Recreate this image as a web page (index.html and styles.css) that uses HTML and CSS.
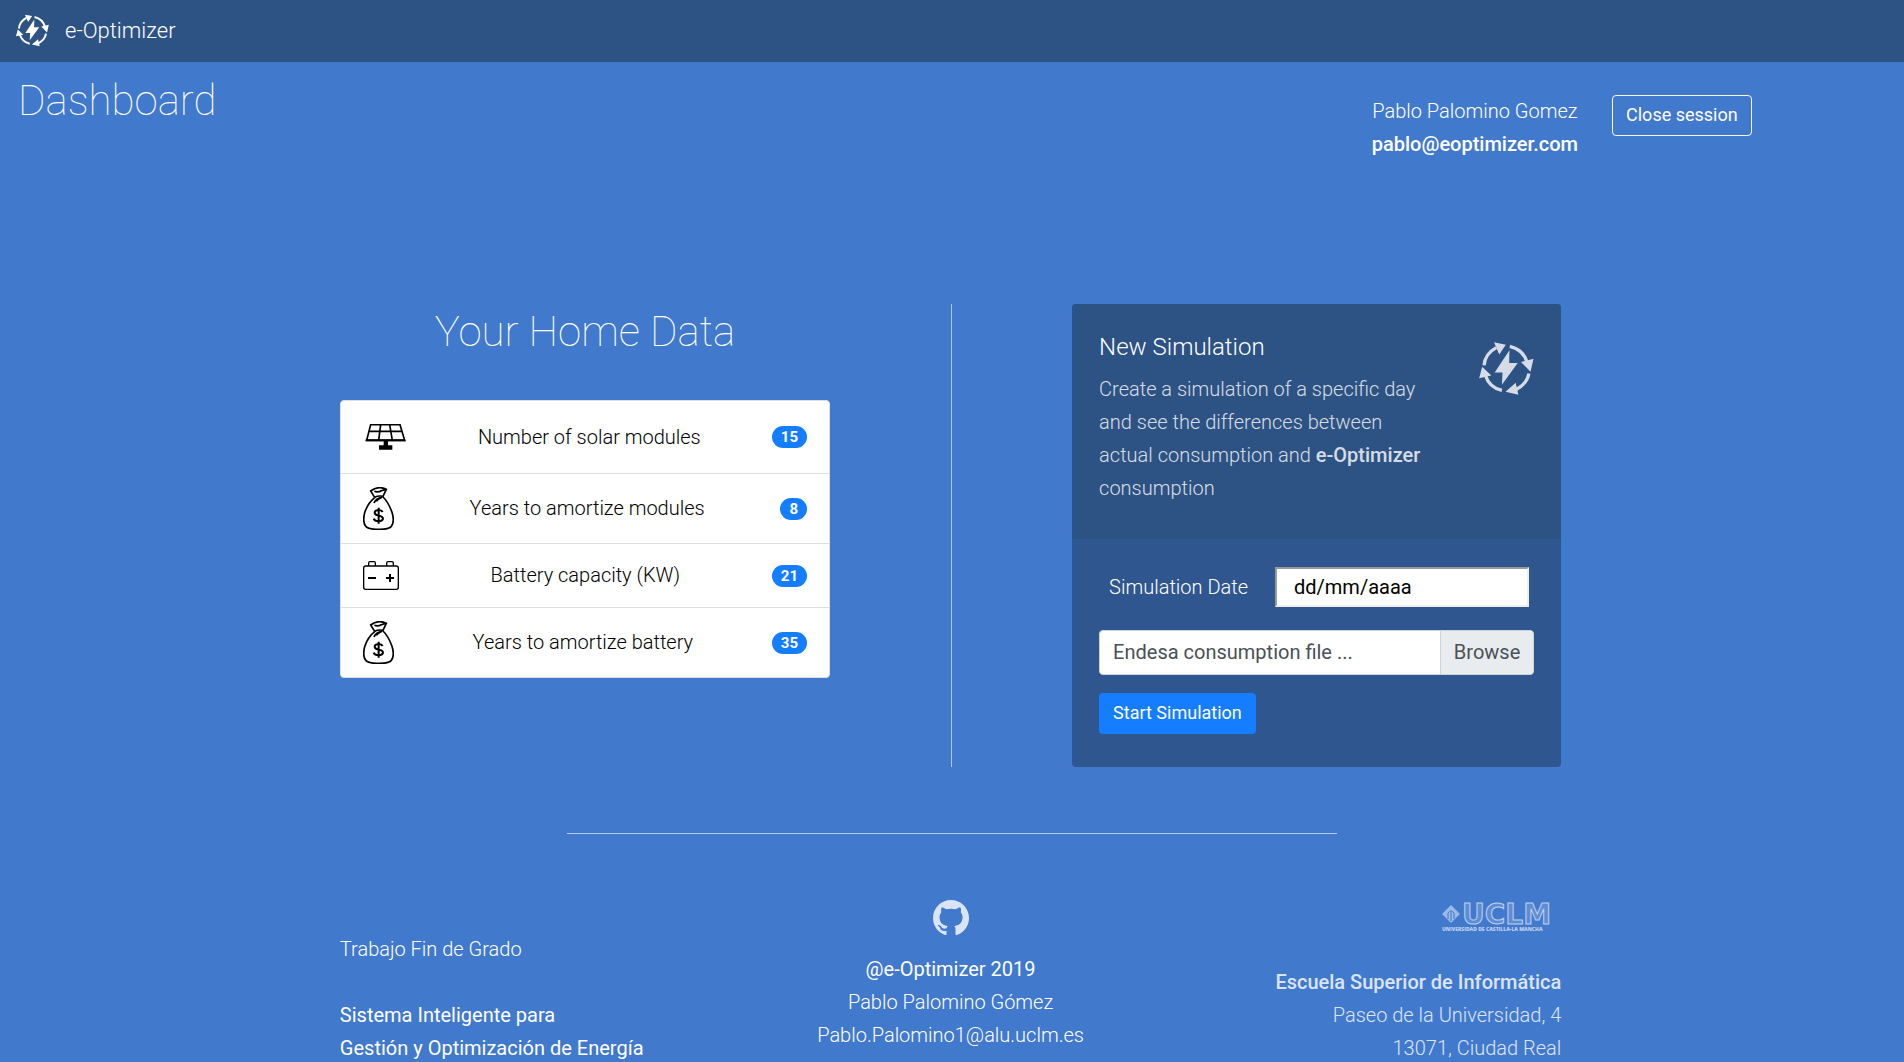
FILE: index.html
```html
<!DOCTYPE html>
<html lang="en">
<head>
<meta charset="utf-8">
<meta name="viewport" content="width=device-width, initial-scale=1">
<title>e-Optimizer</title>
<link rel="stylesheet" href="styles.css">
</head>
<body>
<svg class="sprite" aria-hidden="true">
  <symbol id="logo" viewBox="27 35 166 161">
    <path d="M42 106Q44 71 79 52M120 48Q162 58 173 98M178 131Q173 162 137 181M96 182Q57 173 46 136" fill="none" stroke="currentColor" stroke-width="10"/>
    <path d="M72 36L108 43L88 73ZM154 96L192 86L183 125ZM107 186L138 159L146 195ZM27 145L36 110L64 137ZM119 60L74 128H98L96 165L144 99H118Z" fill="currentColor"/>
  </symbol>
  <symbol id="bag" viewBox="0 0 93 129">
    <path d="M23 12Q34 3 48 2Q57 1 70 7L60 28Q46 25 35 31ZM34 13Q45 17 55 11L66 8M36 31Q14 48 5 77C1 94 0 110 9 119C18 128 32 127 46 127C60 127 76 128 85 118C93 108 91 89 87 76Q76 45 60 30M57 31Q39 34 33 48M57 31Q45 36 40 43" fill="none" stroke="currentColor" stroke-width="5"/>
    <path d="M59 75Q56 69 47 69Q35 70 35 77Q35 83 47 86Q60 88 60 95Q59 102 47 103Q35 103 32 95M47 62V110" fill="none" stroke="currentColor" stroke-width="6"/>
  </symbol>
</svg>

<nav class="navbar">
  <a class="brand" href="#"><svg class="brand-logo" aria-hidden="true"><use href="#logo"/></svg>e-Optimizer</a>
</nav>

<header class="page-head">
  <h1 class="title">Dashboard</h1>
  <div class="session">
    <div class="user">
      <div>Pablo Palomino Gomez</div>
      <div class="email">pablo@eoptimizer.com</div>
    </div>
    <button class="btn btn-outline" type="button">Close session</button>
  </div>
</header>

<main class="content">
  <section class="home">
    <h2 class="title home-title">Your Home Data</h2>
    <ul class="list">
      <li class="item">
        <svg class="icon-solar" viewBox="0 0 132 78" aria-hidden="true">
          <path d="M23 2H111L125 49H11ZM17 22H118M53 2L47 49M80 2L88 49" fill="none" stroke="#000" stroke-width="5"/>
          <path d="M8 46H127V52H8ZM62 52H75V64H88V77H48V64H62Z"/>
        </svg>
        <span>Number of solar modules</span><span class="badge">15</span>
      </li>
      <li class="item">
        <svg class="icon-bag" aria-hidden="true"><use href="#bag"/></svg>
        <span>Years to amortize modules</span><span class="badge">8</span>
      </li>
      <li class="item">
        <svg class="icon-battery" viewBox="0 0 108 87" aria-hidden="true">
          <path d="M8 15H100Q106 15 106 21V79Q106 85 100 85H8Q2 85 2 79V21Q2 15 8 15ZM17 14V6Q17 2 21 2H33Q37 2 37 6V14M71 14V6Q71 2 75 2H87Q91 2 91 6V14" fill="none" stroke="#000" stroke-width="4"/>
          <path d="M15 51H39M69 51H93M81 39V63" stroke="#000" stroke-width="6"/>
        </svg>
        <span>Battery capacity (KW)</span><span class="badge">21</span>
      </li>
      <li class="item">
        <svg class="icon-bag" aria-hidden="true"><use href="#bag"/></svg>
        <span>Years to amortize battery</span><span class="badge">35</span>
      </li>
    </ul>
  </section>

  <div class="divider"></div>

  <section class="card">
    <div class="card-head">
      <div class="intro">
        <h3 class="card-title">New Simulation</h3>
        <p class="card-text">Create a simulation of a specific day and see the differences between actual consumption and <strong>e-Optimizer</strong> consumption</p>
      </div>
      <svg class="card-logo" aria-hidden="true"><use href="#logo"/></svg>
    </div>
    <form class="form">
      <div class="date-row">
        <label for="date">Simulation Date</label>
        <input class="date" id="date" type="text" placeholder="dd/mm/aaaa">
      </div>
      <div class="file">
        <input class="file-input" id="file" type="file">
        <label class="file-label" for="file"><span class="file-name">Endesa consumption file ...</span><span class="browse">Browse</span></label>
      </div>
      <button class="btn btn-primary" type="submit">Start Simulation</button>
    </form>
  </section>
</main>

<hr class="rule">

<footer class="footer">
  <div class="project">
    <p>Trabajo Fin de Grado</p>
    <p class="strong">Sistema Inteligente para<br>Gestión y Optimización de Energía</p>
  </div>
  <div class="author">
    <svg class="github" viewBox="0 0 16 16" role="img" aria-label="GitHub"><path fill="currentColor" d="M8 0C3.58 0 0 3.58 0 8c0 3.54 2.29 6.53 5.47 7.59.4.07.55-.17.55-.38 0-.19-.01-.82-.01-1.49-2.01.37-2.53-.49-2.69-.94-.09-.23-.48-.94-.82-1.13-.28-.15-.68-.52-.01-.53.63-.01 1.08.58 1.23.82.72 1.21 1.87.87 2.33.66.07-.52.28-.87.51-1.07-1.78-.2-3.64-.89-3.64-3.95 0-.87.31-1.59.82-2.15-.08-.2-.36-1.02.08-2.12 0 0 .67-.21 2.2.82.64-.18 1.32-.27 2-.27s1.36.09 2 .27c1.53-1.04 2.2-.82 2.2-.82.44 1.1.16 1.92.08 2.12.51.56.82 1.27.82 2.15 0 3.07-1.87 3.75-3.65 3.95.29.25.54.73.54 1.48 0 1.07-.01 1.93-.01 2.2 0 .21.15.46.55.38A8.01 8.01 0 0 0 16 8c0-4.42-3.58-8-8-8z"/></svg>
    <div class="strong">@e-Optimizer 2019</div>
    <div>Pablo Palomino Gómez</div>
    <div>Pablo.Palomino1@alu.uclm.es</div>
  </div>
  <div class="school">
    <svg class="uclm" viewBox="0 0 112 28" role="img" aria-label="UCLM">
      <path d="M9 0L18 9L9 18L0 9Z" fill="#fff" fill-opacity=".75"/>
      <path d="M6 14V8Q9 4 12 8V14M9 7V16" fill="none" stroke="#4179cd" stroke-width="1"/>
      <text class="uclm-name" x="20" y="19">UCLM</text>
      <text class="uclm-sub" x="0" y="26">UNIVERSIDAD DE CASTILLA-LA MANCHA</text>
    </svg>
    <div class="bold">Escuela Superior de Informática</div>
    <div>Paseo de la Universidad, 4</div>
    <div>13071, Ciudad Real</div>
  </div>
</footer>
</body>
</html>
```
FILE: styles.css
```css
* { box-sizing: border-box; }

body {
  margin: 0;
  background: #4179cd;
  color: #fff;
  font: 300 20px/33px Roboto, sans-serif;
}

h1, h2, h3, p, ul { margin: 0; padding: 0; }

.sprite { position: absolute; width: 0; height: 0; }

.navbar {
  display: flex;
  align-items: center;
  height: 62px;
  padding: 0 16px 1px;
  background: #2d5284;
}

.brand {
  display: flex;
  align-items: center;
  gap: 16px;
  color: #fff;
  font-size: 22px;
  text-decoration: none;
}

.brand-logo { width: 33px; height: 33px; }

.title {
  font-size: 42px;
  line-height: 50px;
  font-weight: 100;
}

.page-head {
  display: flex;
  justify-content: space-between;
  padding: 14px 8% 0 18px;
  min-height: 242px;
}

.session {
  display: flex;
  align-items: flex-start;
  gap: 34px;
  padding-top: 19px;
}

.user { text-align: center; }
.email { font-weight: 500; }

.btn {
  height: 41px;
  padding: 0 13px 1px;
  border: 1px solid transparent;
  border-radius: 4px;
  color: #fff;
  font: 400 18px/24px Roboto, sans-serif;
}

.btn-outline { background: transparent; border-color: #f8f9fa; }
.btn-primary { background: #157dff; align-self: flex-start; }

.content, .footer {
  width: 64.15%;
  margin-left: 17.85%;
  display: grid;
}

.content { grid-template-columns: 490fr 242fr 489fr; }

.home-title { margin: 3px 0 43px; text-align: center; }

.list {
  list-style: none;
  background: #fff;
  border: 1px solid #dfdfdf;
  border-radius: 4px;
  color: #000;
}

.item {
  display: flex;
  align-items: center;
  justify-content: space-between;
  padding: 13px 22px;
}

.item + .item { border-top: 1px solid #dfdfdf; }

.icon-solar { width: 44px; height: 26px; margin: 10px 0; }
.icon-bag { width: 31px; height: 43px; }
.icon-battery { width: 36px; height: 29px; margin: 4px 0; }

.badge {
  padding: 3px 9px;
  border-radius: 11px;
  background: #157dff;
  color: #fff;
  font-size: 15px;
  line-height: 16px;
  font-weight: 700;
}

.divider { justify-self: center; width: 1px; background: rgba(255, 255, 255, .6); }

.card { border-radius: 4px; overflow: hidden; background: #2f568e; }

.card-head {
  display: flex;
  justify-content: space-between;
  padding: 27px 27px 34px;
  background: #2d5284;
}

.intro { width: 75%; }
.card-title { font-size: 24px; line-height: 32px; font-weight: 300; margin-bottom: 10px; }
.card-text { opacity: .8; }
.card-text strong { font-weight: 500; }
.card-logo { width: 55px; height: 53px; margin-top: 11px; opacity: .8; }

.form {
  display: flex;
  flex-direction: column;
  padding: 28px 27px 33px;
}

.date-row {
  display: flex;
  align-items: center;
  gap: 27px;
  padding: 0 5px 0 10px;
}

.date {
  flex: 1;
  min-width: 0;
  height: 40px;
  padding: 0 17px;
  border: 2px inset #eee;
  background: #fff;
  font: 400 20px/24px Roboto, sans-serif;
}

.date::placeholder { color: #000; opacity: 1; }

.file { position: relative; margin: 23px 0 18px; }
.file-input { position: absolute; inset: 0; width: 100%; height: 100%; opacity: 0; }

.file-label {
  display: flex;
  height: 45px;
  border: 1px solid #ced4da;
  border-radius: 4px;
  overflow: hidden;
  background: #fff;
  color: #495057;
  font-weight: 400;
  line-height: 43px;
}

.file-name { flex: 1; padding: 0 13px; }
.browse { padding: 0 13px; border-left: 1px solid #ced4da; background: #e9ecef; }

.rule {
  width: 770px;
  max-width: 90%;
  margin: 66px auto;
  border: 0;
  border-top: 1px solid rgba(255, 255, 255, .6);
}

.footer { grid-template-columns: 1fr 1fr 1fr; }
.strong { font-weight: 400; }
.bold { font-weight: 500; }

.project { padding-top: 33px; }
.project p { margin-bottom: 33px; }

.author { text-align: center; }
.author .github { display: block; width: 36px; height: 36px; margin: 0 auto 17px; opacity: .8; }

.school { text-align: right; opacity: .8; }
.uclm { display: block; width: 112px; height: 28px; margin: 5px 7px 33px auto; overflow: visible; opacity: .8; }
.uclm-name { font: 700 28px "DejaVu Sans", sans-serif; fill: #fff; fill-opacity: .25; stroke: #fff; stroke-width: 1; }
.uclm-sub { font: 800 5px "Open Sans", sans-serif; fill: #fff; }
```
